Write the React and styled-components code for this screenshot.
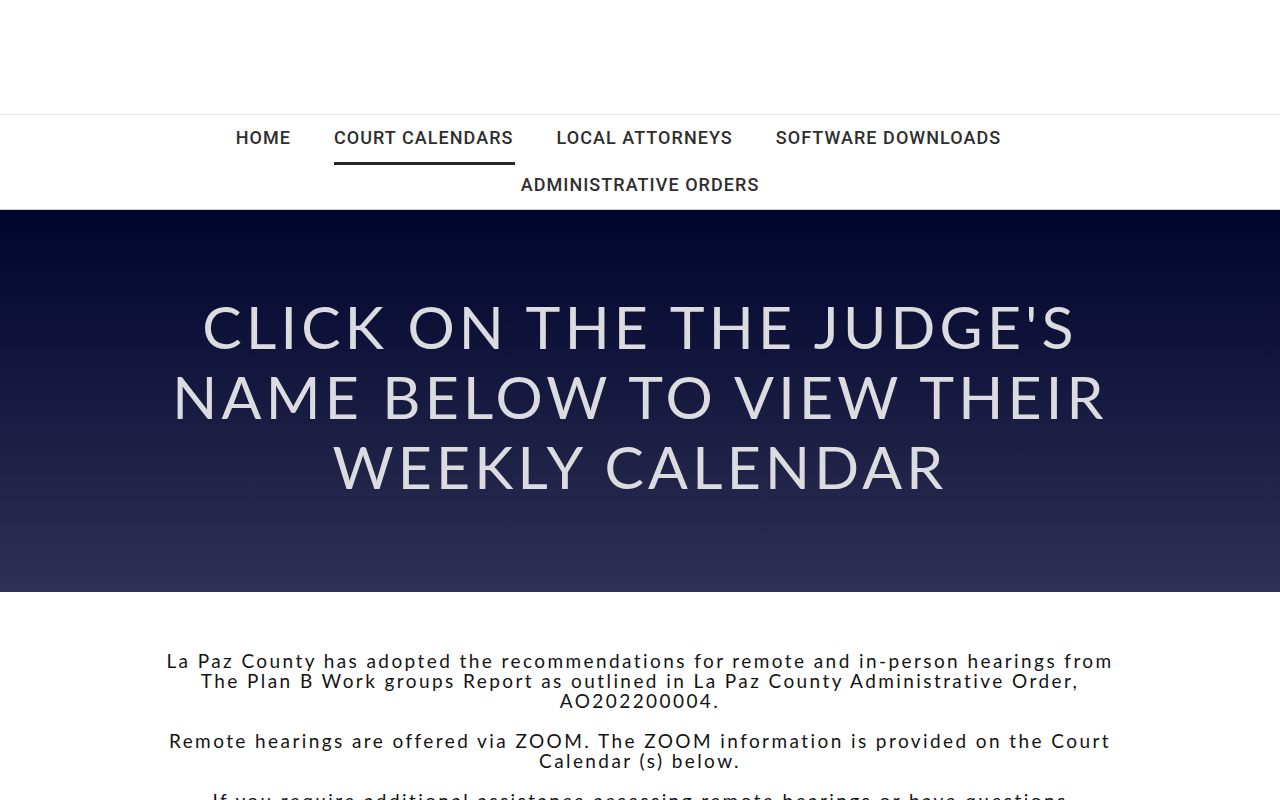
import React from 'react'
import styled, { createGlobalStyle } from 'styled-components'

const GlobalStyle = createGlobalStyle`
  html, body {
    margin: 0;
    padding: 0;
    background: #fff;
  }
  body {
    font-family: "Lato", "Liberation Sans", sans-serif;
    color: #1b1b1b;
  }
`

const links = [
  { label: 'Home' },
  { label: 'Court Calendars', active: true },
  { label: 'Local Attorneys' },
  { label: 'Software Downloads' },
  { label: 'Administrative Orders' },
]

const App = () => {
  return (
    <>
      <GlobalStyle />
      <Header />
      <NavBar>
        <NavList>
          {links.map((l) => (
            <NavItem key={l.label} $active={l.active}>{l.label}</NavItem>
          ))}
        </NavList>
      </NavBar>
      <Hero>
        <HeroTitle>Click on the the Judge's name below to view their weekly calendar</HeroTitle>
      </Hero>
      <Content>
        <Para>
          La Paz County has adopted the recommendations for remote and in-person hearings from
          The Plan B Work groups Report as outlined in La Paz County Administrative Order,
          AO202200004.
        </Para>
        <Para>
          Remote hearings are offered via ZOOM. The ZOOM information is provided on the Court
          Calendar (s) below.
        </Para>
        <Para>
          If you require additional assistance accessing remote hearings or have questions
          concerning your case, please contact the Clerk of the Superior Court.
        </Para>
      </Content>
    </>
  )
}

const Header = styled.header`
  height: 114px;
  border-bottom: 1px solid #e8e8e8;
`

const NavBar = styled.nav`
  display: flex;
  justify-content: center;
  height: 94px;
`

const NavList = styled.div`
  display: flex;
  flex-wrap: wrap;
  justify-content: center;
  max-width: 900px;
`

const NavItem = styled.a`
  position: relative;
  height: 47px;
  margin-right: 43px;
  line-height: 46px;
  font-family: "Roboto", "Liberation Sans", sans-serif;
  font-weight: 500;
  font-size: 18px;
  letter-spacing: 1.05px;
  text-transform: uppercase;
  color: #2e2e2e;
  cursor: pointer;
  &:last-child {
    margin-right: 0;
  }
  &::after {
    content: '';
    display: ${(p) => (p.$active ? 'block' : 'none')};
    position: absolute;
    left: 0;
    right: -1px;
    top: 47px;
    height: 3px;
    background: #262626;
  }
`

const Hero = styled.section`
  border-top: 1px solid #c9c9dc;
  background: linear-gradient(180deg, #01042b 0%, #2e3055 100%);
  padding: 82px 0 90px;
  display: flex;
  justify-content: center;
`

const HeroTitle = styled.h1`
  margin: 0;
  max-width: 960px;
  text-align: center;
  font-family: "Lato", sans-serif;
  font-weight: 400;
  font-size: 59px;
  line-height: 70px;
  letter-spacing: 4.2px;
  text-transform: uppercase;
  color: #dcdce0;
`

const Content = styled.main`
  max-width: 968px;
  margin: 0 auto;
  padding: 59px 0 40px;
  text-align: center;
`

const Para = styled.p`
  margin: 0 0 20px;
  font-family: "Lato", sans-serif;
  font-size: 19px;
  line-height: 20px;
  letter-spacing: 2.42px;
  color: #141414;
`

export default App
